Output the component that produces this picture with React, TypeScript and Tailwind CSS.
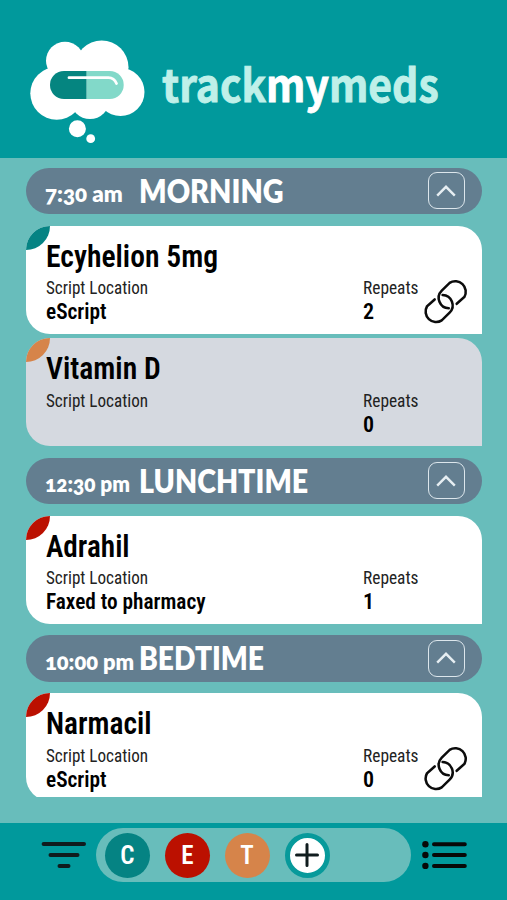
import React from "react";

type Med = {
  name: string;
  nameScale: string;
  location?: string;
  locationScale?: string;
  repeats: string;
  leaf: string;
  bg: string;
  link?: boolean;
};

type Slot = {
  time: React.ReactNode;
  timeScale: string;
  title: string;
  titleScale: string;
  meds: Med[];
};

const CloudLogo = () => (
  <svg width="118" height="106" viewBox="28 39 118 106" className="shrink-0">
    <g fill="#fff">
      <circle cx="65" cy="60.7" r="19" />
      <circle cx="101.7" cy="67.3" r="26.8" />
      <circle cx="56.7" cy="93.3" r="26.4" />
      <circle cx="120.5" cy="92" r="24" />
      <circle cx="90" cy="99.8" r="19.3" />
      <rect x="60" y="62" width="60" height="44" />
      <circle cx="77.4" cy="128.8" r="8.5" />
      <circle cx="90.7" cy="138.7" r="4.4" />
    </g>
    <path d="M86.7 71H64a14 14 0 0 0 0 28h22.7z" fill="#058580" />
    <path d="M86.7 71h23a14 14 0 0 1 0 28h-23z" fill="#82d9c9" />
    <path d="M69 77.7h39.5q5.5 0 8 5.8" fill="none" stroke="#fff" strokeWidth="2.8" strokeLinecap="round" />
  </svg>
);

const Leaf = ({ color }: { color: string }) => (
  <svg width="24" height="24" viewBox="0 0 24 24" fill="currentColor" className={`absolute left-0 top-0 ${color}`}>
    <path d="M0 24A24 24 0 0 1 24 0A24 24 0 0 1 0 24Z" />
  </svg>
);

const LinkIcon = () => (
  <svg width="46" height="46" viewBox="0 0 43.4 43.4" fill="none" stroke="#0c0c0c" strokeWidth="2.4" strokeLinecap="round">
    <path d="M31.8 23.4L39 17A9.9 9.9 0 0 0 25.1 3.7L17.7 10.9A9.8 9.8 0 0 0 24.3 27.6" />
    <path d="M11 19.3L3.8 25.7A9.9 9.9 0 0 0 17.7 39L25.1 31.8A9.8 9.8 0 0 0 18.5 15.1" />
  </svg>
);

const CollapseButton = () => (
  <button className="flex h-[37px] w-[37px] items-center justify-center rounded-[9px] border-[1.5px] border-[#dce6ec]">
    <svg width="20" height="12" viewBox="0 0 20 12" fill="none" stroke="#e6eef2" strokeWidth="2.4">
      <path d="M1.2 10.6L10 1.8L18.8 10.6" />
    </svg>
  </button>
);

const MedCard = ({ med }: { med: Med }) => (
  <article className={`relative h-[108px] shrink-0 rounded-[24px] rounded-br-none pl-[19.5px] pt-[13px] text-black [font-stretch:75%] ${med.bg}`}>
    <Leaf color={med.leaf} />
    <h3 className={`relative w-fit origin-left whitespace-nowrap text-[31px] font-[560] leading-9 ${med.nameScale}`}>{med.name}</h3>
    <div className="mt-[2.5px] grid grid-cols-[317.5px_60px_46px]">
      <div>
        <p className="w-fit origin-left scale-x-[0.925] whitespace-nowrap text-[18.5px] leading-[22px] text-[#222]">Script Location</p>
        <p className={`w-fit origin-left whitespace-nowrap text-[21.5px] font-semibold leading-[25px] ${med.locationScale ?? ""}`}>{med.location}</p>
      </div>
      <div>
        <p className="w-fit origin-left scale-x-[0.94] whitespace-nowrap text-[18.5px] leading-[22px] text-[#222]">Repeats</p>
        <p className="w-fit origin-left text-[22px] font-semibold leading-[25px]">{med.repeats}</p>
      </div>
      <div className="pt-[1.5px]">{med.link && <LinkIcon />}</div>
    </div>
  </article>
);

const SlotHeader = ({ slot }: { slot: Slot }) => (
  <header className="flex h-[46.5px] shrink-0 items-center rounded-full bg-[#637e90] pl-[18.5px] pr-[17.5px] font-['Lato',sans-serif] text-white">
    <div className="w-[94.5px] pt-[5px]">
      <p className={`w-fit origin-left whitespace-nowrap text-[23px] font-extrabold oldstyle-nums leading-7 ${slot.timeScale}`}>{slot.time}</p>
    </div>
    <h2 className={`flex-1 origin-left whitespace-nowrap text-[32px] font-extrabold leading-10 ${slot.titleScale}`}>{slot.title}</h2>
    <CollapseButton />
  </header>
);

const slots: Slot[] = [
  {
    time: "7:30 am",
    timeScale: "scale-x-[0.97]",
    title: "MORNING",
    titleScale: "scale-x-[0.9]",
    meds: [
      { name: "Ecyhelion 5mg", nameScale: "scale-x-[0.955]", location: "eScript", locationScale: "scale-x-[0.99]", repeats: "2", leaf: "text-[#058383]", bg: "bg-white", link: true },
      { name: "Vitamin D", nameScale: "scale-x-[0.955]", repeats: "0", leaf: "text-[#d6844a]", bg: "bg-[#d5d9e0]" },
    ],
  },
  {
    time: "12:30 pm",
    timeScale: "scale-x-[0.905]",
    title: "LUNCHTIME",
    titleScale: "scale-x-[0.893]",
    meds: [
      { name: "Adrahil", nameScale: "scale-x-[0.945]", location: "Faxed to pharmacy", locationScale: "scale-x-[0.99]", repeats: "1", leaf: "text-[#bb1000]", bg: "bg-white" },
    ],
  },
  {
    time: "10:00 pm",
    timeScale: "scale-x-[0.95]",
    title: "BEDTIME",
    titleScale: "scale-x-[0.88]",
    meds: [
      { name: "Narmacil", nameScale: "scale-x-[0.95]", location: "eScript", locationScale: "scale-x-[0.99]", repeats: "0", leaf: "text-[#bb1000]", bg: "bg-white", link: true },
    ],
  },
];

const badges = [
  { letter: "C", bg: "bg-[#058383]" },
  { letter: "E", bg: "bg-[#bb1000]" },
  { letter: "T", bg: "bg-[#d6844a]" },
];

export default function App() {
  return (
    <div className="flex h-[900px] w-[507px] flex-col overflow-hidden bg-[#68bdbb] font-['Roboto',sans-serif]">
      <header className="flex h-[158px] shrink-0 items-start bg-[#01999c] pl-7 pt-[39px]">
        <CloudLogo />
        <h1 className="ml-4 mt-[11px] origin-left scale-x-[0.908] whitespace-nowrap font-['Noto_Sans_CJK_JP','Open_Sans',sans-serif] text-[45px] font-bold leading-[66px] text-[#bff0e9] [-webkit-text-stroke:0.9px]">
          track<span className="text-white">my</span>meds
        </h1>
      </header>

      <main className="ml-[26px] mt-[9.5px] flex h-[629px] w-[456px] shrink-0 flex-col gap-[11.5px] overflow-hidden">
        {slots.map((slot) => (
          <section key={slot.title} className="flex shrink-0 flex-col gap-[11.5px]">
            <SlotHeader slot={slot} />
            <div className="flex flex-col gap-[4.5px]">
              {slot.meds.map((med) => (
                <MedCard key={med.name} med={med} />
              ))}
            </div>
          </section>
        ))}
      </main>

      <footer className="mt-auto flex h-[77px] shrink-0 items-start bg-[#01999c] pt-[5px]">
        <button className="ml-[41px] flex h-[54px] w-[54.5px] items-center">
          <svg width="46" height="28" viewBox="0 0 46 28" stroke="#101c1e" strokeWidth="4" strokeLinecap="round">
            <path d="M2.6 3H43M9.5 14H36.5M18.5 25H27.5" />
          </svg>
        </button>
        <div className="flex h-[54px] w-[315px] items-center gap-[15px] rounded-full bg-[#68bdbb] pl-[9px]">
          {badges.map((b) => (
            <span key={b.letter} className={`flex h-[45px] w-[45px] items-center justify-center rounded-full text-[26px] font-semibold text-white [font-stretch:75%] ${b.bg}`}>
              <span className="scale-x-[0.96]">{b.letter}</span>
            </span>
          ))}
          <button className="flex h-[45px] w-[45px] items-center justify-center rounded-full border-[5px] border-[#079a9b] bg-white">
            <svg width="26" height="26" viewBox="0 0 26 26" stroke="#101c1e" strokeWidth="3" strokeLinecap="round">
              <path d="M13 2.5V23.5M2.5 13H23.5" />
            </svg>
          </button>
        </div>
        <button className="ml-[11px] flex h-[54px] items-center">
          <svg width="46" height="28" viewBox="0 0 46 28" stroke="#080808" strokeWidth="4" strokeLinecap="round">
            <path d="M12 3.2H42.8M12 14H42.8M12 25H42.8" />
            <g stroke="none" fill="#080808">
              <circle cx="3.4" cy="3.2" r="3.2" />
              <circle cx="3.4" cy="14" r="3.2" />
              <circle cx="3.4" cy="25" r="3.2" />
            </g>
          </svg>
        </button>
      </footer>
    </div>
  );
}
